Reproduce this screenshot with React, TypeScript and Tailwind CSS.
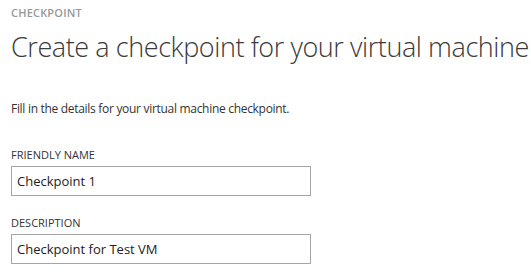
import React from 'react';

const font = { fontFamily: '"Open Sans", "Noto Sans", sans-serif' };

const Field: React.FC<{ label: string; value: string; className?: string }> = ({ label, value, className }) => (
  <div className={className}>
    <label className="block text-[11px] leading-[14px] text-[#333] uppercase">{label}</label>
    <input
      readOnly
      value={value}
      className="mt-[4px] block w-[300px] h-[30px] border border-[#a6a6a6] px-[5px] text-[13px] text-[#222] outline-none bg-white"
    />
  </div>
);

export default function App() {
  return (
    <div className="w-[531px] h-[272px] bg-white overflow-hidden pl-[11px] pt-[6px]" style={font}>
      <div className="text-[11px] leading-[14px] font-semibold text-[#999] tracking-[0.2px]">CHECKPOINT</div>
      <h1 className="mt-[12px] text-[27px] leading-[30px] font-light text-[#3a3a3a] whitespace-nowrap tracking-[-0.42px]">
        Create a checkpoint for your virtual machine
      </h1>
      <p className="mt-[39px] text-[12px] leading-[16px] text-[#333] tracking-[-0.3px]">
        Fill in the details for your virtual machine checkpoint.
      </p>
      <Field className="mt-[31px]" label="Friendly name" value="Checkpoint 1" />
      <Field className="mt-[20px]" label="Description" value="Checkpoint for Test VM" />
    </div>
  );
}
